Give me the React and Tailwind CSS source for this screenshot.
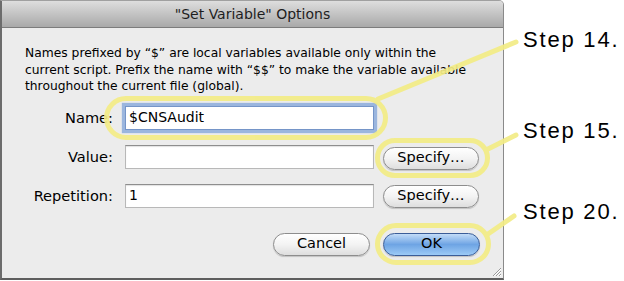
import React from 'react'

const sys = { fontFamily: '"DejaVu Sans", "Liberation Sans", sans-serif' }

const AquaButton = ({ label, primary, className }) => {
  const look = primary
    ? 'border-[#3b5d98] bg-linear-to-b from-[#c3dcf7] via-[#6ea4e4] to-[#9ccaf6]'
    : 'border-[#8d8d8d] bg-linear-to-b from-white via-[#f3f3f3] to-[#dedede]'
  return (
    <button
      type="button"
      className={`h-[23px] rounded-full border text-[14.5px] text-black flex items-center justify-center shadow-[0_1px_1px_rgba(0,0,0,0.18)] ${look} ${className}`}
      style={sys}
    >
      {label}
    </button>
  )
}

const Field = ({ label, value, focused, rowClass }) => (
  <div className={`flex items-start h-[24px] ${rowClass}`}>
    <div className="w-[88px] h-[24px] flex items-center justify-end text-[14.6px] text-black whitespace-nowrap" style={sys}>
      {label}
    </div>
    <div
      className={`ml-[12px] w-[249px] h-[24px] bg-white border flex items-center pl-[3px] text-[14px] text-black ${
        focused
          ? 'border-[#7595c8] shadow-[0_0_1px_3px_rgba(128,164,218,0.75)]'
          : 'border-[#b8b8b8] border-t-[#8e8e8e] shadow-[inset_0_1px_1px_rgba(0,0,0,0.12)]'
      }`}
      style={sys}
    >
      {value}
    </div>
  </div>
)

export default function App() {
  return (
    <div className="relative w-[624px] h-[281px] bg-white flex overflow-hidden">
      {/* dialog */}
      <div className="relative w-[504px] h-[280px] flex flex-col bg-[#ececec] border-l-2 border-b-2 border-r border-t border-l-[#6c6c6c] border-b-[#5e5e5e] border-r-[#8a8a8a] border-t-[#a0a0a0] rounded-tr-[5px] overflow-hidden">
        <div
          className="h-[27px] shrink-0 flex items-center justify-center text-[14px] text-[#1e1e1e] bg-linear-to-b from-[#dedede] to-[#a9a9a9] border-b border-[#7c7c7c]"
          style={sys}
        >
          "Set Variable" Options
        </div>

        <div className="flex flex-col pl-[23px] pt-[17px]">
          <p className="text-[12.3px] leading-[16.5px] text-black whitespace-nowrap" style={sys}>
            Names prefixed by “$” are local variables available only within the
            <br />
            current script. Prefix the name with “$$” to make the variable available
            <br />
            throughout the current file (global).
          </p>

          <Field label="Name:" value="$CNSAudit" focused rowClass="mt-[11px]" />

          <div className="flex items-start mt-[15px]">
            <Field label="Value:" value="" />
            <AquaButton label="Specify…" className="ml-[9px] mt-[2px] w-[96px] h-[22px]" />
          </div>

          <div className="flex items-start mt-[14px]">
            <Field label="Repetition:" value="1" />
            <AquaButton label="Specify…" className="ml-[9px] mt-[1px] w-[96px] h-[22px]" />
          </div>

          <div className="flex mt-[25px] ml-[248px]">
            <AquaButton label="Cancel" className="w-[97px]" />
            <AquaButton label="OK" primary className="ml-[13px] w-[97px]" />
          </div>
        </div>

        {/* resize grip */}
        <svg className="absolute right-[1px] bottom-[1px]" width="12" height="12" viewBox="0 0 12 12">
          <path d="M11 3 L3 11 M11 6 L6 11 M11 9 L9 11" stroke="#9a9a9a" strokeWidth="1" />
          <path d="M11 4 L4 11 M11 7 L7 11 M11 10 L10 11" stroke="#ffffff" strokeWidth="1" />
        </svg>
      </div>

      {/* step labels */}
      <div
        className="flex flex-col pl-[19px] pt-[29px] text-[22px] leading-[22px] tracking-[1.8px] text-black"
        style={{ fontFamily: '"Liberation Sans", Arial, sans-serif' }}
      >
        <div>Step 14.</div>
        <div className="mt-[69px]">Step 15.</div>
        <div className="mt-[59px]">Step 20.</div>
      </div>

      {/* highlight callouts */}
      <svg className="absolute inset-0 pointer-events-none" width="624" height="281" viewBox="0 0 624 281">
        <g fill="none" stroke="#f3ec86" strokeWidth="5" strokeLinecap="round" opacity="0.92">
          <rect x="106.5" y="98.5" width="279" height="39" rx="19.5" />
          <line x1="378" y1="99" x2="516" y2="42" />
          <rect x="377.5" y="140.5" width="110" height="35" rx="17.5" />
          <line x1="486" y1="150" x2="516" y2="135" />
          <rect x="377.5" y="225.5" width="111" height="37" rx="18.5" />
          <line x1="488" y1="234" x2="514" y2="216" />
        </g>
      </svg>
    </div>
  )
}
